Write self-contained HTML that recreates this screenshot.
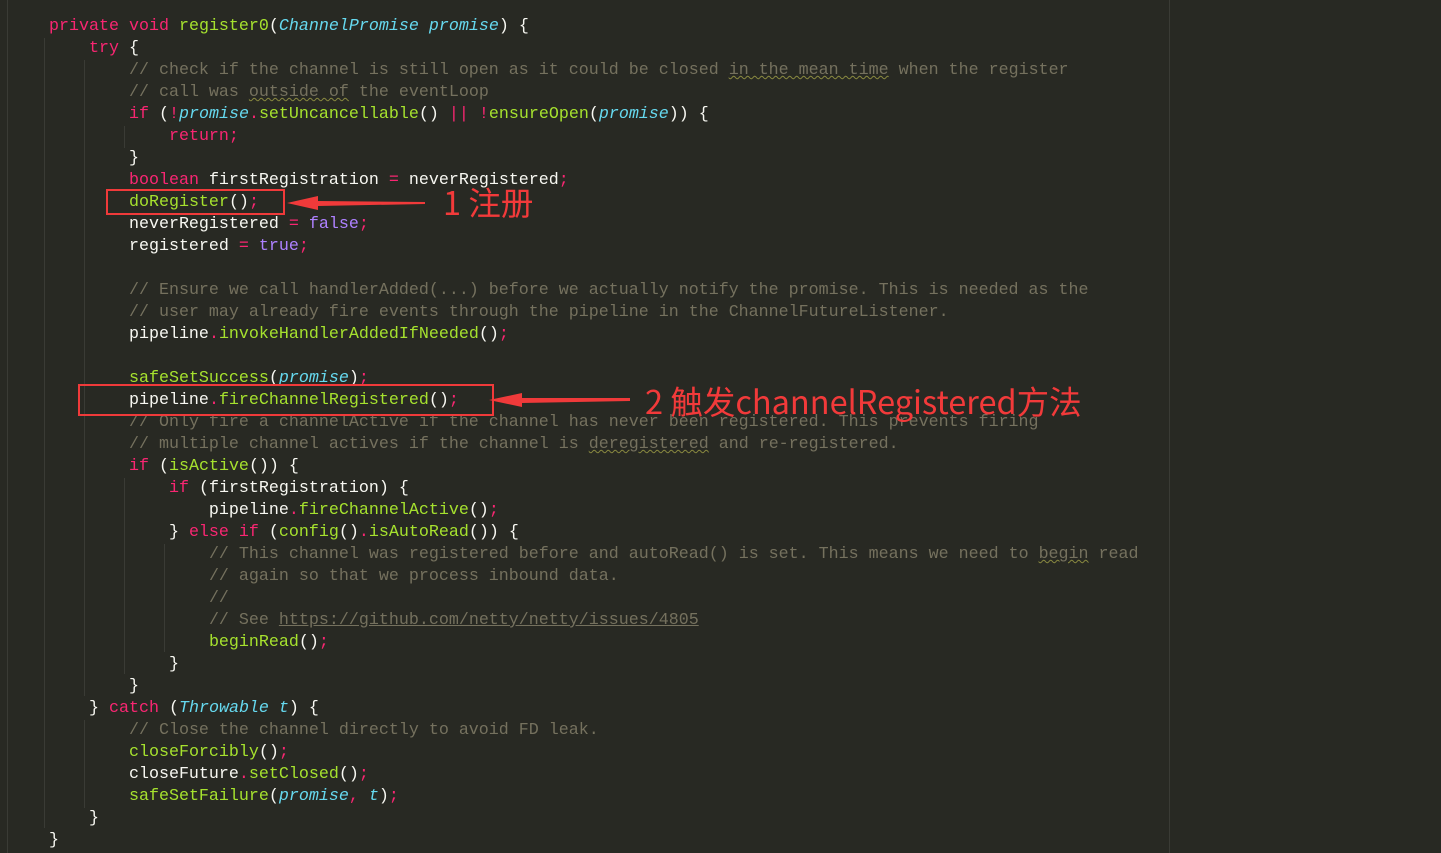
<!DOCTYPE html>
<html><head><meta charset="utf-8"><style>
html,body{margin:0;padding:0;background:#282923;width:1441px;height:853px;overflow:hidden;position:relative}
pre{position:absolute;left:49px;top:16px;margin:0;font-family:"Liberation Mono",monospace;font-size:16.67px;line-height:22px;color:#f8f8f2;letter-spacing:0}
.k{color:#f92672}.f{color:#a6e22e}.t{color:#66d9ef;font-style:italic}.c{color:#75715e}.p{color:#ae81ff}
.u{text-decoration:underline wavy #8a8a40;text-decoration-thickness:1px}
.g{position:absolute;width:1px;background:#3a3b35}
.box{position:absolute;border:2px solid #f03a3a}
.ann{position:absolute;color:#f23a3a;font-family:"Noto Sans CJK SC","Liberation Sans",sans-serif;font-size:32.5px;line-height:1;white-space:nowrap}
</style></head><body>
<div class="g" style="left:7px;top:0;height:853px"></div>
<div class="g" style="left:1169px;top:0;height:853px"></div>
<div class="g" style="left:44px;top:38px;height:790px"></div>
<div class="g" style="left:84px;top:60px;height:636px"></div>
<div class="g" style="left:84px;top:720px;height:88px"></div>
<div class="g" style="left:124px;top:126px;height:22px"></div>
<div class="g" style="left:124px;top:478px;height:196px"></div>
<div class="g" style="left:164px;top:544px;height:108px"></div>
<pre><span class="k">private void </span><span class="f">register0</span>(<span class="t">ChannelPromise promise</span>) {
    <span class="k">try </span>{
        <span class="c">// check if the channel is still open as it could be closed <span class="u">in the mean time</span> when the register</span>
        <span class="c">// call was <span class="u">outside of</span> the eventLoop</span>
        <span class="k">if </span>(<span class="k">!</span><span class="t">promise</span><span class="k">.</span><span class="f">setUncancellable</span>() <span class="k">|| !</span><span class="f">ensureOpen</span>(<span class="t">promise</span>)) {
            <span class="k">return;</span>
        }
        <span class="k">boolean </span>firstRegistration <span class="k">= </span>neverRegistered<span class="k">;</span>
        <span class="f">doRegister</span>()<span class="k">;</span>
        neverRegistered <span class="k">= </span><span class="p">false</span><span class="k">;</span>
        registered <span class="k">= </span><span class="p">true</span><span class="k">;</span>

        <span class="c">// Ensure we call handlerAdded(...) before we actually notify the promise. This is needed as the</span>
        <span class="c">// user may already fire events through the pipeline in the ChannelFutureListener.</span>
        pipeline<span class="k">.</span><span class="f">invokeHandlerAddedIfNeeded</span>()<span class="k">;</span>

        <span class="f">safeSetSuccess</span>(<span class="t">promise</span>)<span class="k">;</span>
        pipeline<span class="k">.</span><span class="f">fireChannelRegistered</span>()<span class="k">;</span>
        <span class="c">// Only fire a channelActive if the channel has never been registered. This prevents firing</span>
        <span class="c">// multiple channel actives if the channel is <span class="u">deregistered</span> and re-registered.</span>
        <span class="k">if </span>(<span class="f">isActive</span>()) {
            <span class="k">if </span>(firstRegistration) {
                pipeline<span class="k">.</span><span class="f">fireChannelActive</span>()<span class="k">;</span>
            } <span class="k">else if </span>(<span class="f">config</span>()<span class="k">.</span><span class="f">isAutoRead</span>()) {
                <span class="c">// This channel was registered before and autoRead() is set. This means we need to <span class="u">begin</span> read</span>
                <span class="c">// again so that we process inbound data.</span>
                <span class="c">//</span>
                <span class="c">// See <span style="text-decoration:underline">https://github.com/netty/netty/issues/4805</span></span>
                <span class="f">beginRead</span>()<span class="k">;</span>
            }
        }
    } <span class="k">catch </span>(<span class="t">Throwable t</span>) {
        <span class="c">// Close the channel directly to avoid FD leak.</span>
        <span class="f">closeForcibly</span>()<span class="k">;</span>
        closeFuture<span class="k">.</span><span class="f">setClosed</span>()<span class="k">;</span>
        <span class="f">safeSetFailure</span>(<span class="t">promise</span><span class="k">, </span><span class="t">t</span>)<span class="k">;</span>
    }
}</pre>
<div class="box" style="left:106px;top:189px;width:175px;height:22px"></div>
<div class="box" style="left:78px;top:384px;width:412px;height:28px"></div>
<svg style="position:absolute;left:0;top:0" width="1441" height="853">
<polygon points="287,203 318,196 318,201 425,202 425,204 318,206 318,210" fill="#f03a3a"/>
<polygon points="489,400 522,393 522,398 630,398 630,401 522,403 522,407" fill="#f03a3a"/>
</svg>
<div class="ann" style="left:443px;top:186px">1 注册</div>
<div class="ann" style="left:645px;top:385px">2 触发channelRegistered方法</div>
</body></html>
